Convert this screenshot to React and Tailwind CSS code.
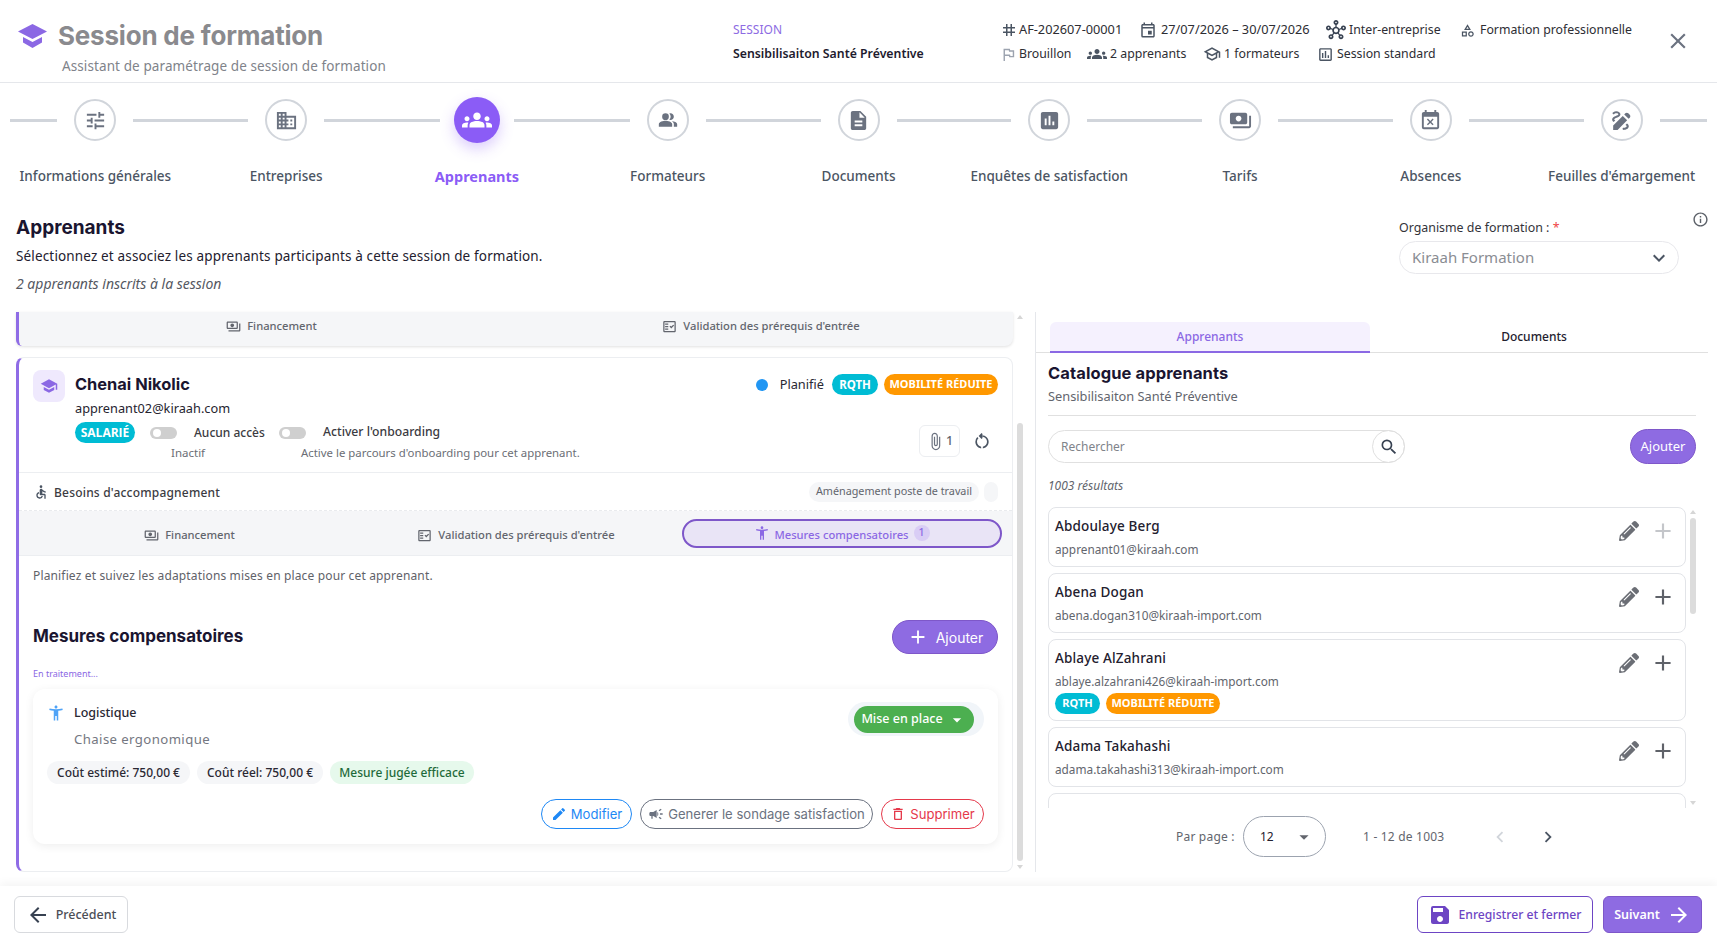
import React from "react";
import {
  MdTune, MdDomain, MdGroups, MdPeopleAlt, MdDescription, MdPoll, MdPayments, MdEventBusy, MdDraw, MdTag,
  MdOutlineEvent, MdOutlineHub, MdOutlineCategory, MdOutlineFlag, MdOutlineSchool, MdOutlinePoll, MdClose, MdInfoOutline,
  MdSchool, MdAttachFile, MdOutlineRestartAlt, MdAccessible, MdOutlinePayments, MdOutlineFactCheck, MdAccessibilityNew,
  MdAdd, MdArrowDropDown, MdEdit, MdCampaign, MdOutlineDelete, MdSearch, MdChevronLeft, MdChevronRight, MdSave,
  MdArrowBack, MdArrowForward, MdKeyboardArrowDown,
} from "react-icons/md";
import { FaPencilAlt } from "react-icons/fa";

const steps = [
  ["Informations générales", MdTune, false, "text-[23px]"],
  ["Entreprises", MdDomain, false, "text-[23px]"],
  ["Apprenants", MdGroups, true, "text-[30px]"],
  ["Formateurs", MdPeopleAlt, false, "text-[20px]"],
  ["Documents", MdDescription, false, "text-[23px]"],
  ["Enquêtes de satisfaction", MdPoll, false, "text-[23px]"],
  ["Tarifs", MdPayments, false, "text-[23px]"],
  ["Absences", MdEventBusy, false, "text-[23px]"],
  ["Feuilles d'émargement", MdDraw, false, "text-[25px]"],
];

function Meta({ icon: Icon, children, className, iconClass }) {
  return (
    <div className={`flex items-center whitespace-nowrap ${className || ""}`}>
      <Icon className={iconClass || "text-[18px] text-[#4b5563]"} />
      <span>{children}</span>
    </div>
  );
}

function Header() {
  return (
    <header className="h-[83px] shrink-0 border-b border-[#e5e7eb] flex bg-white">
      <div className="w-[733px] shrink-0 pl-[18px] pt-[19px]">
        <div className="flex items-center gap-[11px] h-[34px]">
          <svg width="29" height="24" viewBox="0 0 29 24" fill="#8b68e4">
            <path d="M14.5 0 29 7.5 14.5 15 0 7.5z" />
            <path d="M5 13v5.5l9.5 5.5 9.5-5.5V13l-9.500 5z" />
          </svg>
          <h1 className="font-['Inter',sans-serif] text-[26px] font-bold text-[#8a8a8e] leading-none tracking-[-0.2px]">Session de formation</h1>
        </div>
        <p className="ml-[44px] mt-[3px] text-[13.5px] text-[#80838a] tracking-[0.1px]">Assistant de paramétrage de session de formation</p>
      </div>
      <div className="w-[267px] shrink-0 pt-[20px]">
        <div className="text-[12px] text-[#8d6be3] leading-[20px]">SESSION</div>
        <div className="text-[12.3px] font-semibold text-[#1e1b2e] leading-[20px] mt-[4px] whitespace-nowrap">Sensibilisaiton Santé Préventive</div>
      </div>
      <div className="flex-1 pt-[20px] text-[12.3px] text-[#2d2d33]">
        <div className="flex items-center h-[20px]">
          <Meta icon={MdTag} className="w-[139px] gap-[1px] text-[12.75px]">AF-202607-00001</Meta>
          <Meta icon={MdOutlineEvent} className="w-[187px] gap-[4px] text-[12.75px]">27/07/2026 – 30/07/2026</Meta>
          <Meta icon={MdOutlineHub} className="w-[134px] gap-[3px]" iconClass="text-[20px] text-[#374151]">Inter-entreprise</Meta>
          <Meta icon={MdOutlineCategory} className="gap-[5px]" iconClass="text-[15px] text-[#4b5563]">Formation professionnelle</Meta>
        </div>
        <div className="flex items-center h-[20px] mt-[4px]">
          <Meta icon={MdOutlineFlag} className="w-[87px] gap-[2px]" iconClass="text-[17px] text-[#9ca3af]">Brouillon</Meta>
          <Meta icon={MdGroups} className="w-[116px] gap-[3px]" iconClass="text-[20px] text-[#4b5563]">2 apprenants</Meta>
          <Meta icon={MdOutlineSchool} className="w-[114px] gap-[3px]">1 formateurs</Meta>
          <Meta icon={MdOutlinePoll} className="gap-[3px]" iconClass="text-[17px] text-[#4b5563]">Session standard</Meta>
        </div>
      </div>
      <div className="w-[52px] shrink-0 pt-[28px]">
        <MdClose className="text-[26px] text-[#6b7280]" />
      </div>
    </header>
  );
}

function Stepper() {
  return (
    <div className="grid grid-cols-9 h-[119px] shrink-0 pt-[14px]">
      {steps.map(([label, Icon, active, size], i) => (
        <div key={label} className="flex flex-col items-center min-w-0">
          <div className="flex items-center w-full h-[46px]">
            <div className="flex-1 min-w-0">
              <div className={`h-[3px] bg-[#d1d5db] ${i === 0 ? "ml-[10px]" : ""}`} />
            </div>
            {active ? (
              <div className="w-[46px] h-[46px] mx-[14px] rounded-full bg-[#8b5cf6] flex items-center justify-center shadow-[0_6px_14px_rgba(139,92,246,0.3)]">
                <Icon className={`${size} text-white`} />
              </div>
            ) : (
              <div className="w-[42px] h-[42px] mx-[17px] rounded-full bg-white border-2 border-[#d1d5db] flex items-center justify-center">
                <Icon className={`${size} text-[#6b7280]`} />
              </div>
            )}
            <div className="flex-1 min-w-0">
              <div className={`h-[3px] bg-[#d1d5db] ${i === 8 ? "mr-[10px]" : ""}`} />
            </div>
          </div>
          <div className={`mt-[23px] whitespace-nowrap leading-[20px] ${active ? "text-[14.5px] font-bold text-[#8b5cf6]" : "text-[13.5px] font-medium text-[#4b5563]"}`}>{label}</div>
        </div>
      ))}
    </div>
  );
}

function Intro() {
  return (
    <div className="h-[110px] shrink-0 flex pl-[16px]">
      <div className="flex-1 pt-[13px]">
        <h2 className="font-['Inter',sans-serif] text-[19px] font-bold text-[#1a1530] leading-[26px]">Apprenants</h2>
        <p className="text-[13.5px] text-[#23202e] mt-[5px] leading-[20px] tracking-[0.15px]">Sélectionnez et associez les apprenants participants à cette session de formation.</p>
        <p className="text-[14px] italic text-[#555862] mt-[8px] leading-[20px]">2 apprenants inscrits à la session</p>
      </div>
      <div className="w-[282px] shrink-0 pt-[16px]">
        <div className="text-[12.4px] text-[#33333a] leading-[20px]">Organisme de formation : <span className="text-[#ef4444]">*</span></div>
        <div className="mt-[3px] h-[33px] rounded-full border border-[#e8e8ec] flex items-center justify-between pl-[12px] pr-[7px] text-[15px] text-[#8a8d93] w-[280px]">
          <span>Kiraah Formation</span>
          <MdKeyboardArrowDown className="text-[24px] text-[#4b5563]" />
        </div>
      </div>
      <div className="w-[36px] shrink-0 pt-[9px] pl-[11px]">
        <MdInfoOutline className="text-[17px] text-[#5b6068]" />
      </div>
    </div>
  );
}

function Tab({ icon: Icon, children, className }) {
  return (
    <div className={`flex items-center justify-center gap-[6px] text-[11.2px] text-[#62656d] font-medium ${className || ""}`}>
      <Icon className="text-[15px]" />
      <span>{children}</span>
    </div>
  );
}

function Toggle() {
  return (
    <div className="w-[27px] h-[12px] rounded-full bg-[#cfcfcf] flex items-center pl-[3px]">
      <div className="w-[8px] h-[8px] rounded-full bg-white" />
    </div>
  );
}

function OutlineButton({ icon: Icon, children, className }) {
  return (
    <div className={`h-[30px] flex items-center justify-center gap-[4px] rounded-full border bg-white font-['Inter',sans-serif] text-[13.1px] whitespace-nowrap ${className}`}>
      <Icon className="text-[16px]" />
      <span className="pt-[1px]">{children}</span>
    </div>
  );
}

function Scrollbar({ thumbClass, hClass }) {
  return (
    <div className={`flex flex-col items-center w-[8px] ${hClass || ""}`}>
      <div className="w-0 h-0 border-x-[3px] border-x-transparent border-b-[4px] border-b-[#d6d6d6] mt-[3px]" />
      <div className={`w-[6px] rounded-full bg-[#dcdcdc] ${thumbClass}`} />
      <div className="flex-1" />
      <div className="w-0 h-0 border-x-[3px] border-x-transparent border-t-[4px] border-t-[#d6d6d6] mb-[3px]" />
    </div>
  );
}

function LeftPanel() {
  return (
    <div className="w-[1036px] shrink-0 flex pl-[16px] h-full border-r border-[#e5e7eb]">
      <div className="w-[997px] shrink-0 flex flex-col">
        <div className="h-[34px] shrink-0 bg-[#f5f6f8] border-l-[3px] border-[#8f6ce6] rounded-bl-[6px] rounded-br-[8px] shadow-[0_1px_3px_rgba(0,0,0,0.12)] flex pb-[6px]">
          <Tab icon={MdOutlinePayments} className="w-[505px]">Financement</Tab>
          <Tab icon={MdOutlineFactCheck} className="w-[474px]">Validation des prérequis d'entrée</Tab>
        </div>
        <div className="mt-[11px] flex-1 min-h-0 border border-l-[3px] border-[#eceef1] !border-l-[#8f6ce6] rounded-[8px] bg-white flex flex-col">
          <div className="h-[115px] shrink-0 flex justify-between border-b border-[#eceef1] pl-[14px] pr-[14px] pt-[12px]">
            <div className="flex gap-[10px]">
              <div className="w-[32px] h-[32px] rounded-[8px] bg-[#efe9fd] flex items-center justify-center">
                <MdSchool className="text-[18px] text-[#8b68e4]" />
              </div>
              <div className="pt-[2px]">
                <div className="font-['Inter',sans-serif] text-[16.4px] font-bold text-[#1a1530] leading-[24px]">Chenai Nikolic</div>
                <div className="text-[12.75px] text-[#26242f] leading-[18px] mt-[3px]">apprenant02@kiraah.com</div>
                <div className="flex mt-[5px]">
                  <div className="w-[60px] h-[21px] rounded-full bg-[#00bcd4] text-white text-[12px] font-bold flex items-center justify-center font-['Open_Sans',sans-serif]">SALARIÉ</div>
                  <div className="ml-[15px] w-[129px]">
                    <div className="flex items-center gap-[17px] h-[21px]">
                      <Toggle />
                      <span className="text-[12px] font-medium text-[#3b3b42] whitespace-nowrap">Aucun accès</span>
                    </div>
                    <div className="text-[11.5px] text-[#6b6e75] ml-[21px] leading-[18px] mt-[1px]">Inactif</div>
                  </div>
                  <div>
                    <div className="flex items-center gap-[17px] h-[21px]">
                      <Toggle />
                      <span className="text-[12.2px] font-medium text-[#3b3b42] whitespace-nowrap">Activer l'onboarding</span>
                    </div>
                    <div className="text-[11.4px] text-[#6b6e75] ml-[22px] leading-[18px] mt-[1px] whitespace-nowrap">Active le parcours d'onboarding pour cet apprenant.</div>
                  </div>
                </div>
              </div>
            </div>
            <div className="flex flex-col items-end">
              <div className="flex items-center h-[21px] mt-[4px]">
                <div className="w-[12px] h-[12px] rounded-full bg-[#2196f3]" />
                <span className="ml-[12px] text-[12.8px] text-[#2a2833]">Planifié</span>
                <div className="ml-[8px] w-[46px] h-[21px] rounded-full bg-[#00bcd4] text-white text-[11.5px] font-bold flex items-center justify-center">RQTH</div>
                <div className="ml-[6px] w-[114px] h-[21px] rounded-full bg-[#ff9800] text-white text-[11px] font-bold flex items-center justify-center whitespace-nowrap">MOBILITÉ RÉDUITE</div>
              </div>
              <div className="flex items-center mt-[30px]">
                <div className="w-[41px] h-[32px] rounded-[6px] border border-[#eceef1] flex items-center justify-center gap-[1px] text-[12.5px] font-medium text-[#62656d]">
                  <MdAttachFile className="text-[19px] text-[#6b7280]" /> 1
                </div>
                <MdOutlineRestartAlt className="ml-[12px] mr-[6px] text-[20px] text-[#4b5563]" />
              </div>
            </div>
          </div>
          <div className="h-[38px] shrink-0 flex items-center border-b border-dashed border-[#e9ebee] pl-[14px] pr-[14px]">
            <MdAccessible className="text-[16px] text-[#4b5563]" />
            <span className="ml-[5px] pt-[3px] text-[12px] font-medium text-[#3b3b42] tracking-[0.2px]">Besoins d'accompagnement</span>
            <div className="ml-auto h-[20px] px-[7px] rounded-full bg-[#f5f6f8] text-[10.8px] text-[#62656d] flex items-center whitespace-nowrap">Aménagement poste de travail</div>
            <div className="ml-[5px] h-[20px] w-[14px] rounded-full bg-[#f5f6f8]" />
          </div>
          <div className="h-[45px] shrink-0 bg-[#f5f6f8] border-b border-[#eceef1] flex items-center">
            <Tab icon={MdOutlinePayments} className="w-[341px] pt-[5px]">Financement</Tab>
            <Tab icon={MdOutlineFactCheck} className="w-[312px] pt-[5px]">Validation des prérequis d'entrée</Tab>
            <div className="ml-[10px] w-[320px] h-[29px] rounded-full border-2 border-[#7e57c9] bg-[#e9e4f6] flex items-center justify-center text-[11.2px] font-medium text-[#8b68e4]">
              <MdAccessibilityNew className="text-[16px] mr-[4px]" />
              <span className="pt-[4px]">Mesures compensatoires</span>
              <span className="ml-[5px] w-[16px] h-[16px] rounded-full bg-[#d9cdf5] text-[10.5px] flex items-center justify-center">1</span>
            </div>
          </div>
          <div className="flex-1 min-h-0 pl-[14px] pr-[14px]">
            <p className="mt-[11px] text-[12px] text-[#5f6269] leading-[18px] tracking-[0.15px]">Planifiez et suivez les adaptations mises en place pour cet apprenant.</p>
            <div className="flex items-center justify-between mt-[35px] h-[34px]">
              <h3 className="font-['Inter',sans-serif] text-[17px] font-bold text-[#1a1530]">Mesures compensatoires</h3>
              <div className="w-[106px] h-[34px] rounded-full bg-[#8e6be2] border border-[#7e57c9] text-white text-[14px] flex items-center justify-center gap-[7px] font-['Inter',sans-serif]">
                <MdAdd className="text-[22px]" />
                Ajouter
              </div>
            </div>
            <div className="mt-[13px] text-[9px] text-[#8b68e4] leading-[14px]">En traitement...</div>
            <div className="mt-[8px] h-[155px] rounded-[12px] bg-white shadow-[0_2px_10px_rgba(0,0,0,0.07)] pl-[14px] pr-[14px] pt-[14px] flex flex-col">
              <div className="flex justify-between">
                <div>
                  <div className="flex items-center h-[20px]">
                    <MdAccessibilityNew className="text-[18px] text-[#4fa3f7]" />
                    <span className="ml-[9px] text-[12.5px] font-medium text-[#2a2833]">Logistique</span>
                  </div>
                  <div className="ml-[27px] mt-[6px] text-[13.2px] text-[#747781] tracking-[0.4px] leading-[20px]">Chaise ergonomique</div>
                </div>
                <div className="w-[136px] h-[34px] rounded-full bg-[#f1f5f9] pl-[6px] mt-[-1px]">
                  <div className="w-[120px] h-[27px] mt-[2px] rounded-full bg-[#4caf50] text-white text-[12.5px] font-medium flex items-center justify-center gap-[4px] translate-y-[2px]">
                    Mise en place <MdArrowDropDown className="text-[20px]" />
                  </div>
                </div>
              </div>
              <div className="flex gap-[7px] mt-[12px] text-[12px] font-medium">
                <div className="h-[23px] w-[143px] rounded-full bg-[#f5f6f8] text-[#2a2833] flex items-center justify-center whitespace-nowrap">Coût estimé: 750,00 €</div>
                <div className="h-[23px] w-[126px] rounded-full bg-[#f5f6f8] text-[#2a2833] flex items-center justify-center whitespace-nowrap">Coût réel: 750,00 €</div>
                <div className="h-[23px] w-[144px] rounded-full bg-[#e6f9ec] text-[#1f6b3a] flex items-center justify-center whitespace-nowrap">Mesure jugée efficace</div>
              </div>
              <div className="flex justify-end gap-[8px] mt-[15px]">
                <OutlineButton icon={MdEdit} className="w-[91px] border-[#1e88f5] text-[#1e88f5]">Modifier</OutlineButton>
                <OutlineButton icon={MdCampaign} className="w-[233px] border-[#6b7280] text-[#6b7280]">Generer le sondage satisfaction</OutlineButton>
                <OutlineButton icon={MdOutlineDelete} className="w-[103px] border-[#e5394b] text-[#e5394b]">Supprimer</OutlineButton>
              </div>
            </div>
          </div>
        </div>
      </div>
      <div className="ml-[3px]">
        <Scrollbar hClass="h-full" thumbClass="h-[438px] mt-[104px]" />
      </div>
    </div>
  );
}

function Person({ name, email, faded, badges }) {
  return (
    <div className="shrink-0 rounded-[8px] border border-[#e2e4e8] bg-white px-[6px] pt-[8px] pb-[8px] flex justify-between">
      <div>
        <div className="text-[13.5px] font-medium text-[#23202e] leading-[20px] tracking-[0.15px]">{name}</div>
        <div className="text-[11.8px] text-[#62656d] leading-[18px] mt-[4px]">{email}</div>
        {badges ? (
          <div className="flex gap-[6px] mt-[3px] mb-[-2px]">
            <div className="w-[45px] h-[21px] rounded-full bg-[#00bcd4] text-white text-[11px] font-bold flex items-center justify-center">RQTH</div>
            <div className="w-[114px] h-[21px] rounded-full bg-[#ff9800] text-white text-[11px] font-bold flex items-center justify-center whitespace-nowrap">MOBILITÉ RÉDUITE</div>
          </div>
        ) : null}
      </div>
      <div className="flex items-start gap-[11px] pt-[5px] pr-[3px]">
        <FaPencilAlt className="text-[20px] text-[#6b6e75]" />
        <MdAdd className={`text-[26px] mt-[-3px] ${faded ? "text-[#c4c6ca]" : "text-[#5f6269]"}`} />
      </div>
    </div>
  );
}

function RightPanel() {
  return (
    <div className="flex-1 min-w-0 flex flex-col">
      <div className="shrink-0 flex mt-[10px] mr-[9px] border-b border-[#e0e0e0] pl-[14px] h-[31px]">
        <div className="w-[320px] h-[31px] bg-[#f5f1fe] border-b-2 border-[#8b68e4] rounded-t-[6px] text-[12px] font-medium text-[#8b68e4] flex items-center justify-center">Apprenants</div>
        <div className="w-[328px] text-[12px] font-medium text-[#23202e] flex items-center justify-center">Documents</div>
      </div>
      <div className="pl-[12px] pr-[21px] shrink-0">
        <div className="font-['Inter',sans-serif] text-[16.5px] font-bold text-[#1a1530] leading-[22px] mt-[9px] tracking-[0.1px]">Catalogue apprenants</div>
        <div className="text-[12.8px] text-[#62656d] leading-[18px] mt-[3px] border-b border-[#e0e0e0] pb-[10px]">Sensibilisaiton Santé Préventive</div>
        <div className="flex items-center justify-between mt-[13px]">
          <div className="w-[357px] h-[33px] rounded-full border border-[#e0e0e0] flex items-center justify-between pl-[12px]">
            <span className="text-[12px] text-[#80838a]">Rechercher</span>
            <div className="w-[33px] h-[33px] mr-[-1px] rounded-full border border-[#e0e0e0] flex items-center justify-center">
              <MdSearch className="text-[20px] text-[#374151]" />
            </div>
          </div>
          <div className="w-[66px] h-[35px] rounded-full bg-[#8e6be2] border border-[#7e57c9] text-white text-[13px] flex items-center justify-center">Ajouter</div>
        </div>
        <div className="text-[12px] italic text-[#62656d] leading-[18px] mt-[13px]">1003 résultats</div>
      </div>
      <div className="flex pl-[12px] pr-[20px] mt-[12px] h-[301px] overflow-hidden shrink-0">
        <div className="w-[638px] shrink-0 flex flex-col gap-[6px] overflow-hidden">
          <Person name="Abdoulaye Berg" email="apprenant01@kiraah.com" faded />
          <Person name="Abena Dogan" email="abena.dogan310@kiraah-import.com" />
          <Person name="Ablaye AlZahrani" email="ablaye.alzahrani426@kiraah-import.com" badges />
          <Person name="Adama Takahashi" email="adama.takahashi313@kiraah-import.com" />
          <div className="shrink-0 h-[60px] rounded-[8px] border border-[#e2e4e8] bg-white" />
        </div>
        <div className="ml-[3px]">
          <Scrollbar hClass="h-[301px]" thumbClass="h-[96px] mt-[4px]" />
        </div>
      </div>
      <div className="flex items-center mt-[8px] pl-[140px] text-[12px] text-[#62656d] h-[41px] shrink-0">
        <span className="w-[67px] tracking-[0.2px]">Par page :</span>
        <div className="w-[83px] h-[41px] rounded-full border border-[#9ca3af] flex items-center justify-between pl-[16px] pr-[10px] text-[#23202e]">
          12 <MdArrowDropDown className="text-[22px] text-[#62656d]" />
        </div>
        <span className="ml-[37px] w-[115px] tracking-[0.2px] whitespace-nowrap">1 - 12 de 1003</span>
        <MdChevronLeft className="ml-[11px] text-[22px] text-[#d1d5db]" />
        <MdChevronRight className="ml-[26px] text-[22px] text-[#4b5563]" />
      </div>
    </div>
  );
}

function Footer() {
  return (
    <footer className="h-[52px] shrink-0 mt-[14px] bg-white shadow-[0_-4px_8px_rgba(0,0,0,0.04)] flex items-start justify-between pt-[10px] pl-[14px] pr-[15px]">
      <div className="w-[114px] h-[37px] rounded-[6px] border border-[#d8dade] flex items-center justify-center gap-[6px] text-[12.5px] font-medium text-[#4b4e56]">
        <MdArrowBack className="text-[24px] text-[#374151]" />
        <span className="pt-[2px]">Précédent</span>
      </div>
      <div className="flex gap-[10px]">
        <div className="w-[176px] h-[37px] rounded-[6px] border-[1.5px] border-[#6d45c4] bg-white flex items-center justify-center gap-[6px] text-[12.2px] font-medium text-[#6d45c4]">
          <MdSave className="text-[24px]" />
          <span className="pt-[2px]">Enregistrer et fermer</span>
        </div>
        <div className="w-[99px] h-[37px] rounded-[6px] bg-[#8e6be2] border border-[#7e57c9] flex items-center justify-center gap-[7px] text-[12.5px] font-semibold text-white">
          <span className="pt-[2px]">Suivant</span>
          <MdArrowForward className="text-[24px]" />
        </div>
      </div>
    </footer>
  );
}

export default function App() {
  return (
    <div className="w-[1717px] h-[938px] overflow-hidden bg-white flex flex-col font-['Noto_Sans',sans-serif]">
      <Header />
      <Stepper />
      <Intro />
      <main className="h-[560px] shrink-0 flex min-h-0">
        <LeftPanel />
        <RightPanel />
      </main>
      <Footer />
    </div>
  );
}
